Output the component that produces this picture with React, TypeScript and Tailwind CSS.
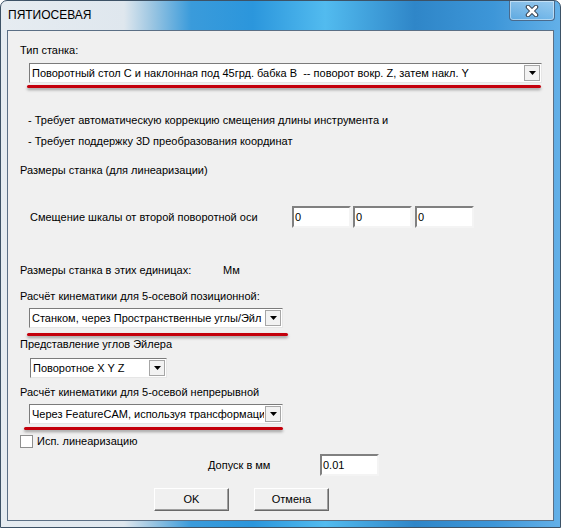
import React from "react";

function Combo({ className, text, textClass = "" }: { className: string; text: string; textClass?: string }) {
  return (
    <div className={"flex border border-t-[#7b7b7b] border-l-[#7b7b7b] border-b-[#e6e6e6] border-r-[#e6e6e6] bg-white " + className}>
      <div className={"flex-1 overflow-hidden whitespace-pre pl-[2px] flex items-center text-black " + textClass}>{text}</div>
      <div className="w-[16px] m-[1px] border border-[#a6a6a6] bg-[#f2f2f2] flex items-center justify-center">
        <svg width="7" height="4" viewBox="0 0 7 4"><path d="M0 0h7L3.5 4z" fill="#000" /></svg>
      </div>
    </div>
  );
}

function Field({ className, value }: { className: string; value: string }) {
  return (
    <div className={"h-[22px] bg-white border-2 border-t-[#808080] border-l-[#808080] border-b-[#f4f4f4] border-r-[#f4f4f4] flex items-center pl-[1px] text-black " + className}>
      {value}
    </div>
  );
}

function RedLine({ className }: { className: string }) {
  return <div className={"h-[3px] bg-[#c4000c] rounded-full shadow-[0_2px_3px_rgba(0,0,0,0.35)] " + className} />;
}

function Btn({ label }: { label: string }) {
  return (
    <div className="w-[75px] h-[23px] bg-[#f0f0f0] border border-t-[#ffffff] border-l-[#ffffff] border-b-[#696969] border-r-[#696969] shadow-[inset_-1px_-1px_0_#a0a0a0] flex items-center justify-center text-black">
      {label}
    </div>
  );
}

export default function App() {
  return (
    <div className="w-[561px] h-[528px] flex flex-col rounded-t-[7px] overflow-hidden border border-[#3d5266] bg-[linear-gradient(90deg,#e6ecf1_0%,#dfe7ee_22%,#9cc6e2_27%,#3a9bdb_34%,#2b96dc_45%,#52bbef_58%,#2f86c8_74%,#3d96d8_88%,#63b0e8_100%)] font-['Liberation_Sans',Arial,sans-serif] text-[11px] leading-[13px]">
      <div className="h-[29px] flex items-start shrink-0">
        <span className="self-center pl-[7px] text-[12px] text-black">ПЯТИОСЕВАЯ</span>
        <div className="ml-auto mr-[5px] w-[46px] h-[20px] rounded-b-[4px] border border-t-0 border-[#4a6a8c] bg-[linear-gradient(180deg,rgba(255,255,255,0.35),rgba(255,255,255,0.12))] shadow-[inset_0_0_0_1px_rgba(255,255,255,0.45)] flex items-center justify-center">
          <svg width="14" height="12" viewBox="0 0 14 12">
            <path d="M3 2l8 8M11 2l-8 8" stroke="#2b3440" strokeWidth="4.5" strokeLinecap="round" />
            <path d="M3 2l8 8M11 2l-8 8" stroke="#ffffff" strokeWidth="2.6" strokeLinecap="round" />
          </svg>
        </div>
      </div>
      <div className="mx-[6px] mb-[6px] flex-1 border border-[#5b6f85] bg-[#f0f0f0] flex flex-col pl-[12px] text-black">
        <div className="mt-[13px]">Тип станка:</div>
        <Combo className="mt-[6px] ml-[9px] w-[513px] h-[20px]" text="Поворотный стол С и наклонная под 45грд. бабка В  -- поворот вокр. Z, затем накл. Y" />
        <RedLine className="mt-[2px] ml-[7px] w-[514px]" />
        <div className="mt-[26px] ml-[8px]">- Требует автоматическую коррекцию смещения длины инструмента и</div>
        <div className="mt-[8px] ml-[8px]">- Требует поддержку 3D преобразования координат</div>
        <div className="mt-[16px]">Размеры станка (для линеаризации)</div>
        <div className="mt-[29px] flex items-center">
          <div className="w-[272px] pl-[10px]">Смещение шкалы от второй поворотной оси</div>
          <Field className="w-[59px]" value="0" />
          <Field className="w-[59px] ml-[2px]" value="0" />
          <Field className="w-[59px] ml-[3px]" value="0" />
        </div>
        <div className="mt-[36px] flex">
          <div className="w-[203px]">Размеры станка в этих единицах:</div>
          <div>Мм</div>
        </div>
        <div className="mt-[13px]">Расчёт кинематики для 5-осевой позиционной:</div>
        <Combo className="mt-[5px] ml-[9px] w-[254px] h-[20px]" text="Станком, через Пространственные углы/Эйл" />
        <RedLine className="mt-[5px] ml-[7px] w-[261px]" />
        <div className="mt-[2px]">Представление углов Эйлера</div>
        <Combo className="mt-[7px] ml-[10px] w-[137px] h-[20px]" text="Поворотное X Y Z" />
        <div className="mt-[8px]">Расчёт кинематики для 5-осевой непрерывной</div>
        <Combo className="mt-[5px] ml-[9px] w-[254px] h-[20px]" text="Через FeatureCAM, используя трансформаци" />
        <RedLine className="mt-[3px] ml-[4px] w-[259px]" />
        <div className="mt-[5px] flex items-center">
          <div className="w-[13px] h-[13px] bg-white border border-[#8e8f8f]" />
          <span className="ml-[4px]">Исп. линеаризацию</span>
        </div>
        <div className="mt-[6px] flex items-center">
          <div className="w-[300px] pl-[188px]">Допуск в мм</div>
          <Field className="w-[59px]" value="0.01" />
        </div>
        <div className="mt-[12px] flex">
          <div className="ml-[134px]"><Btn label="OK" /></div>
          <div className="ml-[25px]"><Btn label="Отмена" /></div>
        </div>
      </div>
    </div>
  );
}
